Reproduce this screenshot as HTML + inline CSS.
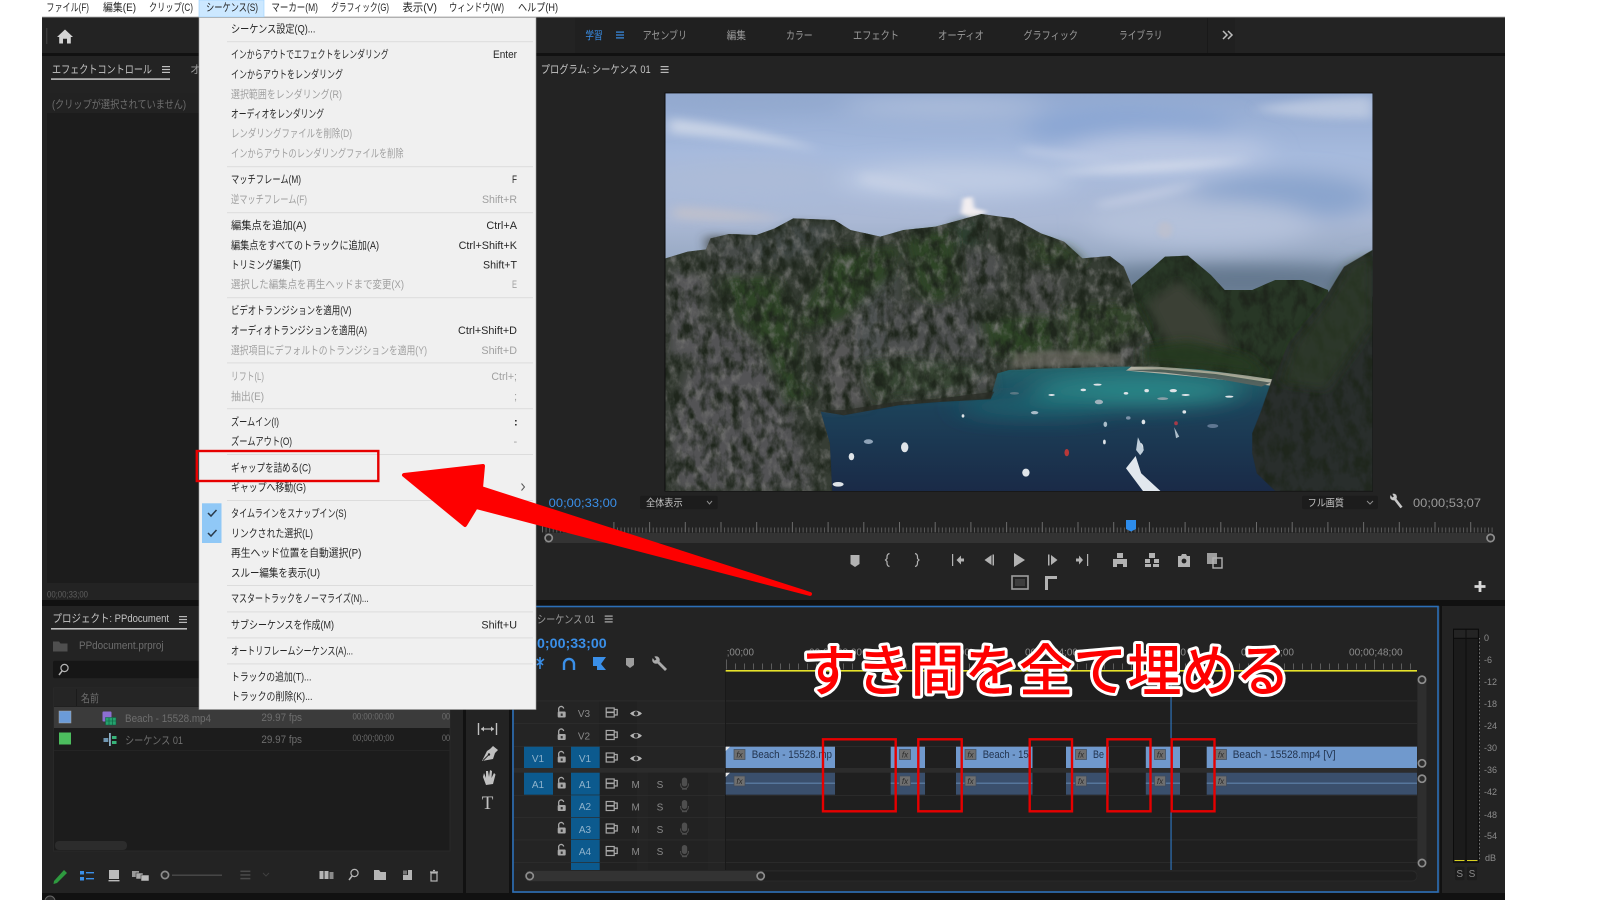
<!DOCTYPE html>
<html lang="ja">
<head>
<meta charset="utf-8">
<title>Premiere Pro シーケンスメニュー</title>
<style>
html,body{margin:0;padding:0;background:#fff;width:1600px;height:900px;overflow:hidden}
svg{display:block;filter:blur(.35px)}
text{font-family:"Liberation Sans","Noto Sans CJK JP",sans-serif;font-size:11px}
.m{fill:#262626}
.d{fill:#a0a0a0}
.g{fill:#9a9a9a}
.l{fill:#c4c4c4}
.f{fill:#6e6e6e}
.b{fill:#3a8fe8}
.c{fill:#22344f}
.t{fill:#8fb3cc;text-anchor:middle;font-size:10px}
.k{fill:#8a8a8a;text-anchor:middle;font-size:10px}
.r{fill:#8c8c8c;font-size:10px}
</style>
</head>
<body>
<svg width="1600" height="900" viewBox="0 0 1600 900" xmlns="http://www.w3.org/2000/svg">
<defs>
<linearGradient id="sky" x1="0" y1="0" x2="0" y2="1">
<stop offset="0" stop-color="#92a9d0"/><stop offset=".3" stop-color="#a6badd"/><stop offset=".62" stop-color="#abb9d5"/><stop offset=".82" stop-color="#98a9c3"/><stop offset="1" stop-color="#73869c"/>
</linearGradient>
<linearGradient id="sea" x1="0" y1="0" x2="0" y2="1">
<stop offset="0" stop-color="#23646c"/><stop offset=".35" stop-color="#1c4159"/><stop offset="1" stop-color="#1a2a47"/>
</linearGradient>
<filter id="bl40" x="-30%" y="-60%" width="160%" height="220%"><feGaussianBlur stdDeviation="30"/></filter>
<filter id="bl12" x="-30%" y="-60%" width="160%" height="220%"><feGaussianBlur stdDeviation="13"/></filter>
<filter id="bl5" x="-30%" y="-60%" width="160%" height="220%"><feGaussianBlur stdDeviation="5"/></filter>
<filter id="rockL" x="0" y="0" width="1" height="1" color-interpolation-filters="sRGB"><feTurbulence type="fractalNoise" baseFrequency="0.055 0.026" numOctaves="4" seed="7"/><feColorMatrix values="0 0 0 0 .47  0 0 0 0 .47  0 0 0 0 .46  2 0 0 0 -.9"/><feComposite in2="SourceAlpha" operator="in"/></filter>
<filter id="rockD" x="0" y="0" width="1" height="1" color-interpolation-filters="sRGB"><feTurbulence type="fractalNoise" baseFrequency="0.045 0.02" numOctaves="4" seed="23"/><feColorMatrix values="0 0 0 0 .12  0 0 0 0 .15  0 0 0 0 .11  2.6 0 0 0 -1.05"/><feComposite in2="SourceAlpha" operator="in"/></filter>
<clipPath id="ph"><rect x="12" y="10" width="1540" height="1193"/></clipPath>
<path id="mt" d="M12 505L60 485 100 478 110 445 150 432 210 435 250 415 290 385 380 390 415 420 480 440 530 420 600 410 640 395 700 372 770 385 830 430 880 455 920 505 980 498 1010 530 1028 590 1040 660 1070 740 1090 830 1000 830 850 835 760 840 735 850 720 925 610 935 520 945 400 975 350 965 370 1060 375 1203 12 1203Z"/>
<path id="mb" d="M1028 585L1075 530 1100 500 1150 497 1200 555 1230 600 1290 600 1340 570 1400 570 1455 600 1470 700 1350 882 1330 868 1180 838 1030 828Z"/>
<path id="mr" d="M1552 480L1490 530 1450 620 1370 760 1335 860 1310 960 1290 1030 1290 1090 1300 1150 1340 1203 1552 1203Z"/>
<g id="ham"><rect x="-4" y="-3.5" width="8" height="1.2"/><rect x="-4" y="-.6" width="8" height="1.2"/><rect x="-4" y="2.3" width="8" height="1.2"/></g>
<g id="lock" fill="#a8a8a8"><rect x="-4" y="-1" width="8" height="6" rx="1"/><path d="M-3-1V-3A2.5 2.5 0 0 1 2-4" fill="none" stroke="#a8a8a8" stroke-width="1.3"/><rect x="-1" y="1" width="2" height="2.4" fill="#333"/></g>
<g id="sync"><rect x="-5.5" y="-4.5" width="8" height="9" fill="none" stroke="#a8a8a8" stroke-width="1.2"/><rect x="-5.5" y="-1" width="8" height="1.6" fill="#a8a8a8"/><path d="M2.5-3H5.5V2.5H2.5" fill="none" stroke="#a8a8a8" stroke-width="1.3"/></g>
<g id="eye"><path d="M-6 0Q0-5.5 6 0 0 5.5-6 0Z" fill="#b4b4b4"/><circle r="2.2" fill="#2a2a2a"/></g>
<g id="mic" fill="#4e4e4e"><rect x="-2.7" y="-6" width="5.4" height="9" rx="2.7"/><path d="M-4 0Q-4 5 0 5 4 5 4 0" fill="none" stroke="#4e4e4e"/><rect x="-2.5" y="5" width="5" height="1.2"/></g>
<g id="fx"><rect width="11" height="10" fill="#6f6f6f" stroke="#414b5a" stroke-width=".7"/><text x="5.5" y="8" text-anchor="middle" style="font-size:8px;font-style:italic" fill="#2a2a2a">fx</text></g>
<g id="circ"><circle r="3.6" fill="#2c2c2c" stroke="#8d8d8d" stroke-width="1.7"/></g>
</defs>

<!-- page / menu bar -->
<rect width="1600" height="900" fill="#fff"/>
<rect x="42" y="0" width="1463" height="17.5" fill="#fff"/>
<rect x="42" y="16.6" width="1463" height="1" fill="#a8a8a8"/>
<rect x="199" y="0" width="65" height="17" fill="#cce8ff" stroke="#99d1ff" stroke-width=".6"/>
<text class="m" x="46.4" y="11" textLength="42.6" lengthAdjust="spacingAndGlyphs">ファイル(F)</text>
<text class="m" x="103" y="11" textLength="33" lengthAdjust="spacingAndGlyphs">編集(E)</text>
<text class="m" x="149" y="11" textLength="44" lengthAdjust="spacingAndGlyphs">クリップ(C)</text>
<text class="m" x="206" y="11" textLength="52" lengthAdjust="spacingAndGlyphs">シーケンス(S)</text>
<text class="m" x="271.4" y="11" textLength="46.6" lengthAdjust="spacingAndGlyphs">マーカー(M)</text>
<text class="m" x="331" y="11" textLength="58" lengthAdjust="spacingAndGlyphs">グラフィック(G)</text>
<text class="m" x="402.5" y="11" textLength="34.5" lengthAdjust="spacingAndGlyphs">表示(V)</text>
<text class="m" x="449" y="11" textLength="55" lengthAdjust="spacingAndGlyphs">ウィンドウ(W)</text>
<text class="m" x="518" y="11" textLength="40" lengthAdjust="spacingAndGlyphs">ヘルプ(H)</text>

<!-- app window -->
<rect x="42" y="17.5" width="1463" height="882.5" fill="#111"/>
<rect x="42" y="18" width="1463" height="35" fill="#232323"/>
<rect x="575" y="18" width="660" height="35" fill="#202020"/>
<rect x="1207" y="18" width="1" height="35" fill="#191919"/>
<path d="M65 29.5L73 37H70.8V43.5H67V38.8H63V43.5H59.2V37H57Z" fill="#d4d4d4"/>
<rect x="46" y="28" width="1.4" height="16" fill="#3b3b3b"/>
<text class="b" x="585.4" y="39" textLength="17.2" lengthAdjust="spacingAndGlyphs">学習</text>
<use href="#ham" x="620" y="35" fill="#3a8fe8"/>
<text class="g" x="642.6" y="39" textLength="44.4" lengthAdjust="spacingAndGlyphs">アセンブリ</text>
<text class="g" x="726.6" y="39" textLength="19.4" lengthAdjust="spacingAndGlyphs">編集</text>
<text class="g" x="786" y="39" textLength="26.7" lengthAdjust="spacingAndGlyphs">カラー</text>
<text class="g" x="853" y="39" textLength="46" lengthAdjust="spacingAndGlyphs">エフェクト</text>
<text class="g" x="938" y="39" textLength="46" lengthAdjust="spacingAndGlyphs">オーディオ</text>
<text class="g" x="1023.4" y="39" textLength="54.6" lengthAdjust="spacingAndGlyphs">グラフィック</text>
<text class="g" x="1119" y="39" textLength="43.5" lengthAdjust="spacingAndGlyphs">ライブラリ</text>
<path d="M1223 31L1227 35 1223 39M1228 31L1232 35 1228 39" fill="none" stroke="#bdbdbd" stroke-width="1.5"/>

<!-- effect control panel -->
<rect x="42" y="56" width="160" height="544" fill="#232323"/>
<rect x="47" y="93" width="155" height="490" fill="#1c1c1c"/>
<rect x="47" y="93" width="155" height="20" fill="#222"/>
<text class="l" x="52" y="73" textLength="100" lengthAdjust="spacingAndGlyphs">エフェクトコントロール</text>
<rect x="51" y="78.3" width="119" height="1.6" fill="#bcbcbc"/>
<use href="#ham" x="166" y="69.5" fill="#c0c0c0"/>
<text class="g" x="190" y="73">オ</text>
<text class="f" x="52" y="108" textLength="134" lengthAdjust="spacingAndGlyphs">(クリップが選択されていません)</text>
<text x="47" y="597.5" textLength="41" lengthAdjust="spacingAndGlyphs" fill="#5f5f5f" style="font-size:9px">00;00;33;00</text>

<!-- project panel -->
<rect x="42" y="606" width="421" height="287" fill="#232323"/>
<text class="l" x="52.5" y="622" textLength="116.5" lengthAdjust="spacingAndGlyphs">プロジェクト: PPdocument</text>
<rect x="51" y="628" width="136" height="1.6" fill="#bcbcbc"/>
<use href="#ham" x="183" y="619.5" fill="#b8b8b8"/>
<path d="M53 641.5H59L60.5 643.5H67.5V651.5H53Z" fill="#4f4f4f"/>
<text class="f" x="79" y="649" textLength="84.6" lengthAdjust="spacingAndGlyphs">PPdocument.prproj</text>
<rect x="53" y="660.7" width="400" height="17.5" rx="2" fill="#161616"/>
<circle cx="64.5" cy="668" r="3.6" fill="none" stroke="#b5b5b5" stroke-width="1.2"/><path d="M62 671L59 675" stroke="#b5b5b5" stroke-width="1.5"/>
<rect x="53.5" y="688" width="396.5" height="163" fill="#1c1c1c" stroke="#2b2b2b" stroke-width=".8"/>
<rect x="54" y="688" width="396" height="18.5" fill="#252525"/>
<rect x="76" y="689" width="1" height="17" fill="#1b1b1b"/>
<text class="f" x="81" y="702" textLength="18" lengthAdjust="spacingAndGlyphs">名前</text>
<rect x="54" y="707" width="396" height="21" fill="#3b3b3b"/>
<rect x="54" y="750" width="396" height=".8" fill="#262626"/>
<rect x="59" y="711" width="12" height="12" fill="#6b9bd8" stroke="#aaa" stroke-width=".5"/>
<rect x="59" y="732.5" width="12" height="12" fill="#4cbd5e"/>
<rect x="102.5" y="711.5" width="9" height="10" rx="1" fill="#8d6fd3"/><rect x="105.5" y="717.5" width="10.5" height="7.5" fill="#25a26e" stroke="#0e5a3c" stroke-width=".5"/><path d="M106 721H116M109 718V725M112.5 718V725" stroke="#0e5a3c" stroke-width=".6"/>
<rect x="109" y="733" width="1.8" height="13" fill="#8eb0c7"/><rect x="103.5" y="738" width="4.8" height="4" fill="#6f95b0"/><rect x="112" y="736" width="4.5" height="3" fill="#37b47a"/><rect x="112" y="741" width="4.5" height="3" fill="#37b47a"/>
<text class="f" x="125" y="722" textLength="86" lengthAdjust="spacingAndGlyphs">Beach - 15528.mp4</text>
<text class="f" x="125" y="744" textLength="58" lengthAdjust="spacingAndGlyphs">シーケンス 01</text>
<text class="f" x="261.4" y="721" textLength="40.6" lengthAdjust="spacingAndGlyphs">29.97 fps</text>
<text class="f" x="261.4" y="743" textLength="40.6" lengthAdjust="spacingAndGlyphs">29.97 fps</text>
<text class="f" x="352.5" y="719.5" textLength="41.5" lengthAdjust="spacingAndGlyphs" style="font-size:9px">00:00:00:00</text>
<text class="f" x="352.5" y="741" textLength="41.5" lengthAdjust="spacingAndGlyphs" style="font-size:9px">00;00;00;00</text>
<text class="f" x="442" y="719.5" textLength="8" lengthAdjust="spacingAndGlyphs" style="font-size:9px">00</text>
<text class="f" x="442" y="741" textLength="8" lengthAdjust="spacingAndGlyphs" style="font-size:9px">00</text>
<rect x="55" y="841" width="72" height="9" rx="4" fill="#2c2c2c"/>
<path d="M54 881L64 870 67 873 57 883 53.5 884Z" fill="#2e9a3f"/>
<rect x="80" y="871" width="4" height="3.5" fill="#3a8fe8"/><rect x="80" y="877" width="4" height="3.5" fill="#3a8fe8"/><rect x="86" y="872" width="8" height="1.4" fill="#3a8fe8"/><rect x="86" y="878" width="8" height="1.4" fill="#3a8fe8"/>
<rect x="109" y="870" width="10" height="9" fill="#bbb"/><rect x="108.5" y="880" width="11" height="1.4" fill="#bbb"/>
<rect x="132" y="871" width="7" height="6" fill="#999"/><rect x="136" y="873" width="7" height="6" fill="#aaa" stroke="#222" stroke-width=".5"/><rect x="141" y="875" width="8" height="6" fill="#bbb" stroke="#222" stroke-width=".5"/>
<use href="#circ" x="165" y="875"/><rect x="172" y="874.5" width="50" height="1.4" fill="#4a4a4a"/>
<use href="#ham" x="245.5" y="875" fill="#4a4a4a" transform="translate(-61.5 -218.8) scale(1.25)"/>
<path d="M263 873L266 876 269 873" fill="none" stroke="#3f3f3f" stroke-width="1.1"/>
<rect x="319.5" y="871" width="4" height="8" fill="#b5b5b5"/><rect x="324.5" y="871" width="4" height="8" fill="#b5b5b5"/><rect x="329.5" y="872" width="4" height="7" fill="#8a8a8a"/>
<circle cx="354.5" cy="873" r="3.6" fill="none" stroke="#b5b5b5" stroke-width="1.2"/><path d="M352 876L349 880" stroke="#b5b5b5" stroke-width="1.5"/>
<path d="M374 870H379L380.5 872H386V880H374Z" fill="#b5b5b5"/>
<path d="M403 870H412V880H403V875H408V870Z" fill="#b5b5b5"/><rect x="403" y="870.5" width="4" height="4" fill="#777"/>
<path d="M430 872H438M433 870.5H435" stroke="#b5b5b5" stroke-width="1.2"/><rect x="431" y="873" width="6" height="8" fill="none" stroke="#b5b5b5" stroke-width="1.2"/>

<!-- tools panel -->
<rect x="466" y="606" width="43" height="287" fill="#232323"/>
<path d="M478.5 723V735M496.5 723V735" stroke="#c0c0c0" stroke-width="1.4"/><path d="M481 729H494" stroke="#c0c0c0" stroke-width="1.2"/><path d="M481 729L484 726.5V731.5ZM494 729L491 726.5V731.5Z" fill="#c0c0c0"/>
<path d="M493 746L498 750 495 753 493 759 482 761 487 751 490 749Z" fill="#c0c0c0"/><path d="M483 760.5L488.5 755" stroke="#232323" stroke-width=".9"/><circle cx="489" cy="754.5" r="1.2" fill="#232323"/>
<path d="M483 777L484 773 486 778 486 771 488 771 489 777 490 770 492 771 491.5 778 494 773 495.5 774.5 493 784 486 785Z" fill="#c0c0c0"/>
<text x="487.5" y="809" text-anchor="middle" fill="#c0c0c0" style="font-size:19px;font-family:'Liberation Serif',serif">T</text>

<!-- program panel -->
<rect x="536" y="56" width="969" height="544" fill="#232323"/>
<text class="l" x="540.7" y="73" textLength="110" lengthAdjust="spacingAndGlyphs">プログラム: シーケンス 01</text>
<use href="#ham" x="664.6" y="69.5" fill="#b8b8b8"/>

<!-- photo -->
<rect x="664.5" y="92.5" width="708.5" height="399" fill="#0e0e0e"/>
<g transform="translate(660 90) scale(.4591 .3333)" clip-path="url(#ph)">
<rect x="12" y="10" width="1540" height="610" fill="url(#sky)"/>
<g filter="url(#bl40)">
<ellipse cx="1020" cy="110" rx="230" ry="60" fill="#8aa6d3"/>
<ellipse cx="1360" cy="320" rx="200" ry="70" fill="#8aa4cd"/>
<ellipse cx="200" cy="20" rx="220" ry="40" fill="#93a9ce"/>
<ellipse cx="640" cy="270" rx="260" ry="50" fill="#bfcce4"/>
<ellipse cx="1180" cy="400" rx="250" ry="70" fill="#b4c1da"/>
<ellipse cx="180" cy="270" rx="220" ry="60" fill="#acbbd8"/>
<ellipse cx="1100" cy="190" rx="230" ry="60" fill="#b8c6e2"/>
<ellipse cx="620" cy="50" rx="220" ry="25" fill="#b0c0dc"/>
<ellipse cx="1280" cy="570" rx="340" ry="45" fill="#62768c"/>
</g>
<g filter="url(#bl12)" opacity=".75">
<path d="M20 85Q200 110 350 180 200 150 20 130Z" fill="#d6ddea"/>
<path d="M860 245Q1080 210 1290 210 1130 250 900 250Z" fill="#dde2ee"/>
<path d="M1290 55Q1430 20 1552 20V85Q1400 90 1290 55Z" fill="#c4cfe3"/>
<path d="M950 340Q1080 300 1180 275 1110 320 960 350Z" fill="#d0d7e8"/>
<path d="M440 250Q560 270 660 320 520 310 440 280Z" fill="#c8d2e6"/>
<path d="M780 170Q920 190 1000 215 880 210 800 190Z" fill="#c4cfe6"/>
<path d="M30 350Q150 355 270 385 150 400 30 385Z" fill="#c4c2ca"/>
</g>
<g filter="url(#bl5)">
<path d="M660 325L680 320 685 355 715 365 680 385 655 370Z" fill="#f2eef0"/>
<ellipse cx="1100" cy="420" rx="16" ry="25" fill="#c4bfc8" opacity=".5"/>
</g>
<rect x="350" y="825" width="1000" height="380" fill="url(#sea)"/>
<g filter="url(#bl40)">
<ellipse cx="1040" cy="900" rx="230" ry="50" fill="#2a8486"/>
<ellipse cx="820" cy="950" rx="170" ry="30" fill="#1f6470"/>
</g>
<use href="#mb" fill="#283726"/>
<use href="#mb" filter="url(#rockD)"/>
<g filter="url(#bl12)">
<path d="M1060 640L1130 570 1200 660 1250 780 1110 780Z" fill="#3b3f35"/>
</g>
<path d="M1030 826Q1180 835 1335 868V888Q1180 860 1015 842Z" fill="#b7b6a8"/>
<path d="M1010 840L1100 848 1220 868 1310 890 1330 878 1210 852 1090 838Z" fill="#566460"/>
<use href="#mt" fill="#363d34"/>
<g filter="url(#bl12)">
<path d="M20 540L100 560 90 800 20 800Z" fill="#565658"/>
<path d="M100 700L230 720 290 960 340 1200 30 1200 20 1000Z" fill="#525254"/>
<path d="M340 700L440 680 450 950 360 960Z" fill="#565657"/>
<path d="M420 560L520 550 500 800 430 820Z" fill="#505252"/>
<path d="M480 640L700 640 725 900 500 920Z" fill="#4e504f"/>
<path d="M660 480L750 490 740 620 670 610Z" fill="#4e504f"/>
<path d="M780 540L880 560 860 820 770 820Z" fill="#4d4f4e"/>
<path d="M880 680L1040 680 1050 810 870 820Z" fill="#474947"/>
<path d="M100 440L220 450 210 520 110 520Z" fill="#464b48"/>
<path d="M200 470L300 400 380 410 330 500 220 510Z" fill="#424846"/>
<path d="M110 490L230 560 160 590 110 550Z" fill="#535555"/>
<path d="M640 400L700 390 690 470 640 470Z" fill="#2f4030"/>
</g>
<g filter="url(#bl12)" fill="#2e4526">
<path d="M130 560L250 560 290 690 300 880 340 910 280 950 230 780 170 690Z"/>
<path d="M530 440L640 420 650 600 600 640 560 600Z"/>
<path d="M380 480L520 470 500 560 400 680 330 720 300 700Z"/>
<path d="M700 680L860 680 870 770 790 810 720 790Z"/>
<path d="M880 650L1030 640 1060 720 950 800 880 790Z" opacity=".8"/>
<path d="M790 440L890 470 930 520 820 520Z" opacity=".8"/>
<path d="M430 820L540 800 720 830 650 900 470 930Z" opacity=".7"/>
</g>
<g clip-path="url(#ph)">
<use href="#mt" filter="url(#rockL)"/>
<use href="#mt" filter="url(#rockD)"/>
</g>
<g filter="url(#bl12)"><path d="M1050 770L1150 750 1280 800 1330 860 1210 836 1100 826 1050 820Z" fill="#27381f" opacity=".85"/></g>
<g filter="url(#bl5)"><path d="M770 790L860 780 1000 790 1010 822 850 830 765 835Z" fill="#77746c" opacity=".55"/></g>
<path d="M345 962L400 976 520 946 610 936 720 928 728 905 610 925 520 935 400 960Z" fill="#2a2c26" opacity=".75"/>
<use href="#mr" fill="#292e2c"/>
<use href="#mr" filter="url(#rockD)"/>
<g filter="url(#bl12)"><path d="M1500 520L1450 640 1380 760 1350 880 1450 900 1552 700V490Z" fill="#2d3f26" opacity=".55"/></g>
<g fill="#dfe4e8">
<ellipse cx="533" cy="1072" rx="8" ry="15"/><ellipse cx="417" cy="1100" rx="6" ry="11"/><ellipse cx="454" cy="1055" rx="10" ry="7" fill="#8fa3b8"/><ellipse cx="797" cy="1148" rx="8" ry="12"/><ellipse cx="1047" cy="1075" rx="6" ry="16"/><ellipse cx="886" cy="1088" rx="5" ry="11" fill="#b83838"/><ellipse cx="968" cy="1056" rx="3" ry="7"/><ellipse cx="1124" cy="1000" rx="4" ry="6" fill="#a63a48"/><ellipse cx="1204" cy="1008" rx="12" ry="6" fill="#5f7792"/><ellipse cx="970" cy="1003" rx="4" ry="8" fill="#a9bcc8"/><ellipse cx="1053" cy="996" rx="4" ry="7"/><ellipse cx="1020" cy="984" rx="5" ry="5" fill="#7d92a8"/><ellipse cx="1142" cy="966" rx="4" ry="5"/><ellipse cx="956" cy="936" rx="9" ry="7" fill="#9fb2bc"/><ellipse cx="816" cy="968" rx="8" ry="5" fill="#a9bcc8"/><ellipse cx="922" cy="900" rx="6" ry="4"/><ellipse cx="953" cy="884" rx="9" ry="3"/><ellipse cx="1118" cy="902" rx="8" ry="5"/><ellipse cx="1095" cy="926" rx="12" ry="4" fill="#8aa0a8"/><ellipse cx="1145" cy="915" rx="9" ry="3"/><ellipse cx="1240" cy="920" rx="9" ry="3"/><ellipse cx="1060" cy="902" rx="5" ry="5"/><ellipse cx="1015" cy="910" rx="5" ry="4"/><ellipse cx="853" cy="915" rx="7" ry="3"/><ellipse cx="772" cy="910" rx="10" ry="4" fill="#5a7884"/><ellipse cx="388" cy="1183" rx="12" ry="7"/><ellipse cx="660" cy="978" rx="3" ry="5"/>
</g>
<path d="M1015 1135L1036 1098 1048 1150 1090 1203H1052Z" fill="#e2e8ee"/><path d="M1041 1042L1054 1080 1046 1096 1037 1080Z" fill="#c0cfdb"/><path d="M1120 1012L1131 1040 1124 1045Z" fill="#aebfcc"/>
</g>

<!-- program controls -->
<text class="b" x="548.7" y="507" textLength="68.3" lengthAdjust="spacingAndGlyphs" style="font-size:12px">00;00;33;00</text>
<rect x="640" y="495.7" width="77.7" height="13.5" rx="2" fill="#1c1c1c"/>
<text class="l" x="646" y="506.5" textLength="36.6" lengthAdjust="spacingAndGlyphs" style="font-size:10px">全体表示</text>
<path d="M707 501L709.5 504 712 501" fill="none" stroke="#8d8d8d"/>
<rect x="1302" y="495.7" width="76" height="13.5" rx="2" fill="#1c1c1c"/>
<text class="l" x="1307.6" y="506.5" textLength="36.4" lengthAdjust="spacingAndGlyphs" style="font-size:10px">フル画質</text>
<path d="M1367 501L1370 504 1373 501" fill="none" stroke="#8d8d8d"/>
<path d="M1394.5 498.5L1401.5 507.5" stroke="#c8c8c8" stroke-width="2.6"/><circle cx="1393.5" cy="497" r="3.4" fill="#c8c8c8"/><path d="M1393 497L1391 493.5" stroke="#232323" stroke-width="2"/>
<text class="g" x="1413" y="507" textLength="68" lengthAdjust="spacingAndGlyphs" style="font-size:12px">00;00;53;07</text>
<path d="M542 530H1494" stroke="#5a5a5a" stroke-width="5" stroke-dasharray="1 2.57"/>
<path d="M542 527H1494" stroke="#6a6a6a" stroke-width="10" stroke-dasharray="1 34.7"/>
<path d="M1126 520H1136V529L1131 531.5 1126 529Z" fill="#2d8ceb"/>
<rect x="545" y="533" width="946" height="10" fill="#333"/>
<use href="#circ" x="548.7" y="538"/><use href="#circ" x="1490.6" y="538"/>
<g fill="#b2b2b2">
<path d="M850.5 555H859.5V564L855 567 850.5 564Z"/>
<path d="M889.5 553.5Q887 554 887 557V558.5L885.5 560 887 561.5V563Q887 566 889.5 566.5" fill="none" stroke="#b2b2b2" stroke-width="1.2"/>
<path d="M915 553.5Q917.5 554 917.5 557V558.5L919 560 917.5 561.5V563Q917.5 566 915 566.5" fill="none" stroke="#b2b2b2" stroke-width="1.2"/>
<path d="M952 554H953.2V566H952ZM956.5 560L961 555.5V558.5H964V561.5H961V564.5Z"/>
<path d="M992.5 554.5H994V565.5H992.5ZM984.5 560L991.5 555V565Z"/>
<path d="M1014 553L1025 560 1014 567Z"/>
<path d="M1048 554.5H1049.5V565.5H1048ZM1051 555L1057.5 560 1051 565Z"/>
<path d="M1087 554H1088.2V566H1087ZM1083 560L1079 564.5V561.5H1076V558.5H1079V555.5Z"/>
<path d="M1113 559H1127V567H1123V564H1117V567H1113ZM1117 553H1123V558H1117Z"/>
<path d="M1145 559H1150V563H1145ZM1154 559H1159V563H1154ZM1149 553H1155V558H1149ZM1145 564H1151V567H1145ZM1153 564H1159V567H1153Z"/>
<path d="M1178 556H1181L1182 554H1186L1187 556H1190V567H1178Z"/><circle cx="1184" cy="561" r="2.4" fill="#232323"/>
<rect x="1207" y="553" width="10" height="11" fill="#9d9d9d"/><rect x="1213" y="558" width="9" height="10" fill="none" stroke="#b2b2b2" stroke-width="1.4"/>
<rect x="1012" y="576" width="16" height="13" fill="none" stroke="#9d9d9d" stroke-width="1.6"/><rect x="1015" y="579" width="10" height="7" fill="#3d3d3d"/>
<path d="M1045 576H1057V579H1048V590H1045Z"/>
</g>
<path d="M1480 581V592M1474.5 586.5H1485.5" stroke="#d8d8d8" stroke-width="2.8"/>

<!-- timeline panel -->
<rect x="512" y="606" width="928" height="287" fill="#232323"/>
<rect x="725" y="672" width="692" height="198" fill="#1f1f1f"/>
<rect x="513" y="700.5" width="212" height="170" fill="#242424"/>
<rect x="599" y="700.5" width="38" height="170" fill="#212121"/>
<rect x="648" y="770" width="60" height="100" fill="#222"/>
<g fill="#2c2c2c">
<rect x="513" y="700.5" width="904" height=".9"/><rect x="513" y="723" width="904" height=".9"/><rect x="513" y="746" width="904" height=".9"/><rect x="513" y="795" width="904" height=".9"/><rect x="513" y="817" width="904" height=".9"/><rect x="513" y="839.5" width="904" height=".9"/><rect x="513" y="862" width="904" height=".9"/>
<rect x="513" y="768" width="904" height="4.7" fill="#2c2c2c"/>
</g>
<rect x="725" y="672" width="1" height="198" fill="#191919"/>
<text class="g" x="537" y="623" textLength="58" lengthAdjust="spacingAndGlyphs">シーケンス 01</text>
<use href="#ham" x="608.7" y="619" fill="#b0b0b0"/>
<text class="b" x="537" y="648" textLength="69.7" lengthAdjust="spacingAndGlyphs" style="font-size:14px;font-weight:bold">0;00;33;00</text>
<path d="M537 659L543 665M544 659L537 665M540 657V669" stroke="#3a8fe8" stroke-width="1.5"/>
<path d="M564 670V664A5 5 0 0 1 574 664V670" fill="none" stroke="#3a8fe8" stroke-width="2.4"/>
<path d="M593 657H606L601 664 606 670H597V666H593Z" fill="#3a8fe8"/>
<path d="M626 658H634V665L630 668 626 665Z" fill="#9d9d9d"/>
<path d="M656.5 660.5L666 670" stroke="#aaa" stroke-width="2.8"/><circle cx="656" cy="660" r="3.8" fill="#aaa"/><path d="M655.5 660L653 656.5" stroke="#232323" stroke-width="2.2"/>
<text class="r" x="726.7" y="655.5" textLength="27.3" lengthAdjust="spacingAndGlyphs">;00;00</text>
<text class="r" x="809" y="655.5" textLength="53" lengthAdjust="spacingAndGlyphs">00;00;08;00</text>
<text class="r" x="917" y="655.5" textLength="53" lengthAdjust="spacingAndGlyphs">00;00;16;00</text>
<text class="r" x="1025" y="655.5" textLength="53" lengthAdjust="spacingAndGlyphs">00;00;24;00</text>
<text class="r" x="1133" y="655.5" textLength="53" lengthAdjust="spacingAndGlyphs">00;00;32;00</text>
<text class="r" x="1241" y="655.5" textLength="53" lengthAdjust="spacingAndGlyphs">00;00;40;00</text>
<text class="r" x="1349" y="655.5" textLength="53.6" lengthAdjust="spacingAndGlyphs">00;00;48;00</text>
<path d="M726 666.5H1417" stroke="#5c5c5c" stroke-width="6" stroke-dasharray="1 8"/>
<path d="M726 664H1417" stroke="#5c5c5c" stroke-width="9" stroke-dasharray="1 107"/>
<rect x="725.7" y="670" width="691.3" height="1.6" fill="#e7e32a"/>
<!-- track buttons -->
<g fill="#0c5a8e">
<rect x="524" y="746.7" width="29" height="21.3"/><rect x="524" y="772.7" width="29" height="22"/>
<rect x="571" y="746.7" width="28.7" height="21.3"/><rect x="571" y="772.7" width="28.7" height="22"/><rect x="571" y="795.3" width="28.7" height="21.7"/><rect x="571" y="817.7" width="28.7" height="21.7"/><rect x="571" y="840" width="28.7" height="22"/><rect x="571" y="862.7" width="28.7" height="7.3"/>
</g>
<text class="t" x="538" y="762">V1</text><text class="t" x="538" y="788">A1</text>
<text class="t" x="585" y="762">V1</text><text class="t" x="585" y="788">A1</text><text class="t" x="585" y="810">A2</text><text class="t" x="585" y="833">A3</text><text class="t" x="585" y="855">A4</text>
<text class="k" x="584" y="717">V3</text><text class="k" x="584" y="739.5">V2</text>
<use href="#lock" x="561.7" y="712.5"/><use href="#lock" x="561.7" y="735"/><use href="#lock" x="561.7" y="757.5"/><use href="#lock" x="561.7" y="783.5"/><use href="#lock" x="561.7" y="806"/><use href="#lock" x="561.7" y="828.5"/><use href="#lock" x="561.7" y="850.5"/>
<use href="#sync" x="611.7" y="712.5"/><use href="#sync" x="611.7" y="735"/><use href="#sync" x="611.7" y="757.5"/><use href="#sync" x="611.7" y="783.5"/><use href="#sync" x="611.7" y="806"/><use href="#sync" x="611.7" y="828.5"/><use href="#sync" x="611.7" y="851"/>
<use href="#eye" x="636" y="713.5"/><use href="#eye" x="636" y="735.7"/><use href="#eye" x="636" y="758.5"/>
<text class="k" x="635.7" y="788">M</text><text class="k" x="635.7" y="810.5">M</text><text class="k" x="635.7" y="833">M</text><text class="k" x="635.7" y="855">M</text>
<text class="k" x="660" y="788">S</text><text class="k" x="660" y="810.5">S</text><text class="k" x="660" y="833">S</text><text class="k" x="660" y="855">S</text>
<use href="#mic" x="684.5" y="783.5"/><use href="#mic" x="684.5" y="806"/><use href="#mic" x="684.5" y="828.5"/><use href="#mic" x="684.5" y="851"/>
<!-- clips -->
<g fill="#7099cd">
<rect x="725.7" y="746.7" width="109.3" height="21.3"/><rect x="890.7" y="746.7" width="34.3" height="21.3"/><rect x="956" y="746.7" width="76.5" height="21.3"/><rect x="1066" y="746.7" width="43" height="21.3"/><rect x="1145.8" y="746.7" width="34.2" height="21.3"/><rect x="1206.7" y="746.7" width="210.3" height="21.3"/>
</g>
<g fill="#3a4f6c">
<rect x="725.7" y="772.7" width="109.3" height="22"/><rect x="890.7" y="772.7" width="34.3" height="22"/><rect x="956" y="772.7" width="76.5" height="22"/><rect x="1066" y="772.7" width="43" height="22"/><rect x="1145.8" y="772.7" width="34.2" height="22"/><rect x="1206.7" y="772.7" width="210.3" height="22"/>
</g>
<g fill="#6a90bb">
<rect x="725.7" y="782.7" width="109.3" height=".9"/><rect x="890.7" y="782.7" width="34.3" height=".9"/><rect x="956" y="782.7" width="76.5" height=".9"/><rect x="1066" y="782.7" width="43" height=".9"/><rect x="1145.8" y="782.7" width="34.2" height=".9"/><rect x="1206.7" y="782.7" width="210.3" height=".9"/>
</g>
<path d="M725.7 746.7H730L725.7 751ZM725.7 772.7H730L725.7 777Z" fill="#e8e8e8"/>
<use href="#fx" x="734" y="749.5"/><use href="#fx" x="734" y="776"/><use href="#fx" x="899.5" y="749.5"/><use href="#fx" x="899.5" y="776"/><use href="#fx" x="965" y="749.5"/><use href="#fx" x="965" y="776"/><use href="#fx" x="1075.5" y="749.5"/><use href="#fx" x="1075.5" y="776"/><use href="#fx" x="1154.5" y="749.5"/><use href="#fx" x="1154.5" y="776"/><use href="#fx" x="1215.5" y="749.5"/><use href="#fx" x="1215.5" y="776"/>
<text class="c" x="751.7" y="758" textLength="80.3" lengthAdjust="spacingAndGlyphs">Beach - 15528.mp</text>
<text class="c" x="982.7" y="758" textLength="46" lengthAdjust="spacingAndGlyphs">Beach - 15</text>
<text class="c" x="1093" y="758" textLength="11" lengthAdjust="spacingAndGlyphs">Be</text>
<text class="c" x="1232.7" y="758" textLength="102.9" lengthAdjust="spacingAndGlyphs">Beach - 15528.mp4 [V]</text>
<rect x="1170.5" y="672" width="1.1" height="198" fill="#2f78c4"/>
<!-- v scroll -->
<rect x="1417.5" y="680" width="9" height="83" fill="#2e2e2e"/><rect x="1417.5" y="779" width="9" height="84" fill="#2e2e2e"/>
<use href="#circ" x="1422" y="679.7"/><use href="#circ" x="1422" y="763.3"/><use href="#circ" x="1422" y="778.7"/><use href="#circ" x="1422" y="863"/>
<!-- h scroll -->
<rect x="525" y="871" width="892" height="10" rx="5" fill="#1e1e1e" stroke="#2c2c2c" stroke-width=".7"/>
<rect x="527" y="871" width="236" height="10" fill="#333"/>
<use href="#circ" x="529.7" y="876"/><use href="#circ" x="760.7" y="876"/>
<!-- timeline border -->
<rect x="513" y="606.5" width="925" height="285.5" fill="none" stroke="#2c6fb8" stroke-width="1.6"/>

<!-- meter -->
<rect x="1442" y="606" width="63" height="287" fill="#232323"/>
<rect x="1453.5" y="629.3" width="24.9" height="233" fill="#1b1b1b" stroke="#0c0c0c" stroke-width="1"/>
<rect x="1453.5" y="629.3" width="24.9" height="9" fill="#242424" stroke="#0c0c0c" stroke-width="1"/>
<rect x="1465.5" y="629.3" width="1" height="233" fill="#0d0d0d"/>
<path d="M1454.5 860.5H1464.5M1467 860.5H1477.5" stroke="#d8d020" stroke-width="1"/>
<path d="M1479.5 638V860" stroke="#7a7a7a" stroke-width="1" stroke-dasharray="1.4 2.2"/>
<text class="r" style="font-size:9px" x="1484" y="641">0</text><text class="r" style="font-size:9px" x="1484" y="663">-6</text><text class="r" style="font-size:9px" x="1484" y="685">-12</text><text class="r" style="font-size:9px" x="1484" y="707">-18</text><text class="r" style="font-size:9px" x="1484" y="729">-24</text><text class="r" style="font-size:9px" x="1484" y="751">-30</text><text class="r" style="font-size:9px" x="1484" y="773">-36</text><text class="r" style="font-size:9px" x="1484" y="795">-42</text><text class="r" style="font-size:9px" x="1484" y="818">-48</text><text class="r" style="font-size:9px" x="1484" y="839">-54</text><text class="r" style="font-size:9px" x="1485" y="861">dB</text>
<rect x="1455" y="866.7" width="9.5" height="13.5" rx="1.5" fill="#1c1c1c"/><rect x="1467" y="866.7" width="10" height="13.5" rx="1.5" fill="#1c1c1c"/>
<text class="k" x="1459.7" y="877">S</text><text class="k" x="1472" y="877">S</text>
<circle cx="50" cy="901" r="5" fill="#2a2a2a" stroke="#666"/>

<!-- menu -->
<rect x="199" y="17.5" width="337" height="692" fill="#f0f0f0" stroke="#9f9f9f" stroke-width=".6"/>
<rect x="202" y="503.3" width="19.5" height="39.7" fill="#90c8f6"/>
<path d="M208 513L211 516 216.5 510M208 533L211 536 216.5 530" fill="none" stroke="#2a3a4a" stroke-width="1.5"/>
<g fill="#dcdcdc">
<rect x="227" y="41.2" width="306" height="1"/><rect x="227" y="166.2" width="306" height="1"/><rect x="227" y="212.2" width="306" height="1"/><rect x="227" y="297.2" width="306" height="1"/><rect x="227" y="362.4" width="306" height="1"/><rect x="227" y="408.2" width="306" height="1"/><rect x="227" y="454" width="306" height="1"/><rect x="227" y="500" width="306" height="1"/><rect x="227" y="585" width="306" height="1"/><rect x="227" y="611.4" width="306" height="1"/><rect x="227" y="637.4" width="306" height="1"/><rect x="227" y="663.4" width="306" height="1"/>
</g>
<text class="m" x="231" y="32.5" textLength="84.4" lengthAdjust="spacingAndGlyphs">シーケンス設定(Q)...</text>
<text class="m" x="231" y="58" textLength="157.6" lengthAdjust="spacingAndGlyphs">インからアウトでエフェクトをレンダリング</text>
<text class="m" x="493" y="58" textLength="24" lengthAdjust="spacingAndGlyphs">Enter</text>
<text class="m" x="231" y="78" textLength="112" lengthAdjust="spacingAndGlyphs">インからアウトをレンダリング</text>
<text class="d" x="231" y="98" textLength="111" lengthAdjust="spacingAndGlyphs">選択範囲をレンダリング(R)</text>
<text class="m" x="231" y="117.5" textLength="93" lengthAdjust="spacingAndGlyphs">オーディオをレンダリング</text>
<text class="d" x="231" y="137" textLength="121" lengthAdjust="spacingAndGlyphs">レンダリングファイルを削除(D)</text>
<text class="d" x="231" y="157" textLength="172.6" lengthAdjust="spacingAndGlyphs">インからアウトのレンダリングファイルを削除</text>
<text class="m" x="231" y="183" textLength="70" lengthAdjust="spacingAndGlyphs">マッチフレーム(M)</text>
<text class="m" x="512" y="183" textLength="5" lengthAdjust="spacingAndGlyphs">F</text>
<text class="d" x="231" y="203" textLength="76" lengthAdjust="spacingAndGlyphs">逆マッチフレーム(F)</text>
<text class="d" x="482" y="203" textLength="35" lengthAdjust="spacingAndGlyphs">Shift+R</text>
<text class="m" x="231" y="229" textLength="75.4" lengthAdjust="spacingAndGlyphs">編集点を追加(A)</text>
<text class="m" x="486.4" y="229" textLength="30.6" lengthAdjust="spacingAndGlyphs">Ctrl+A</text>
<text class="m" x="231" y="249" textLength="148" lengthAdjust="spacingAndGlyphs">編集点をすべてのトラックに追加(A)</text>
<text class="m" x="458.6" y="249" textLength="58.4" lengthAdjust="spacingAndGlyphs">Ctrl+Shift+K</text>
<text class="m" x="231" y="268.5" textLength="70" lengthAdjust="spacingAndGlyphs">トリミング編集(T)</text>
<text class="m" x="483" y="268.5" textLength="34" lengthAdjust="spacingAndGlyphs">Shift+T</text>
<text class="d" x="231" y="288" textLength="173" lengthAdjust="spacingAndGlyphs">選択した編集点を再生ヘッドまで変更(X)</text>
<text class="d" x="512" y="288" textLength="5" lengthAdjust="spacingAndGlyphs">E</text>
<text class="m" x="231" y="314" textLength="120.4" lengthAdjust="spacingAndGlyphs">ビデオトランジションを適用(V)</text>
<text class="m" x="231" y="334" textLength="136" lengthAdjust="spacingAndGlyphs">オーディオトランジションを適用(A)</text>
<text class="m" x="458" y="334" textLength="59" lengthAdjust="spacingAndGlyphs">Ctrl+Shift+D</text>
<text class="d" x="231" y="354" textLength="196" lengthAdjust="spacingAndGlyphs">選択項目にデフォルトのトランジションを適用(Y)</text>
<text class="d" x="481.4" y="354" textLength="35.6" lengthAdjust="spacingAndGlyphs">Shift+D</text>
<text class="d" x="231" y="380" textLength="33" lengthAdjust="spacingAndGlyphs">リフト(L)</text>
<text class="d" x="491.4" y="380" textLength="25.6" lengthAdjust="spacingAndGlyphs">Ctrl+;</text>
<text class="d" x="231" y="400" textLength="33" lengthAdjust="spacingAndGlyphs">抽出(E)</text>
<text class="d" x="514" y="400">;</text>
<text class="m" x="231" y="425.5" textLength="48" lengthAdjust="spacingAndGlyphs">ズームイン(I)</text>
<text class="m" x="514" y="425.5" style="font-weight:bold">:</text>
<text class="m" x="231" y="445" textLength="61" lengthAdjust="spacingAndGlyphs">ズームアウト(O)</text>
<text class="d" x="513.5" y="445">-</text>
<text class="m" x="231" y="471.5" textLength="80" lengthAdjust="spacingAndGlyphs">ギャップを詰める(C)</text>
<text class="m" x="231" y="491" textLength="75" lengthAdjust="spacingAndGlyphs">ギャップへ移動(G)</text>
<path d="M521.5 483.5L524.5 487 521.5 490.5" fill="none" stroke="#555" stroke-width="1"/>
<text class="m" x="231" y="517" textLength="115.4" lengthAdjust="spacingAndGlyphs">タイムラインをスナップイン(S)</text>
<text class="m" x="231" y="537" textLength="82" lengthAdjust="spacingAndGlyphs">リンクされた選択(L)</text>
<text class="m" x="231" y="556.5" textLength="130.4" lengthAdjust="spacingAndGlyphs">再生ヘッド位置を自動選択(P)</text>
<text class="m" x="231" y="576.5" textLength="89" lengthAdjust="spacingAndGlyphs">スルー編集を表示(U)</text>
<text class="m" x="231" y="602" textLength="137.6" lengthAdjust="spacingAndGlyphs">マスタートラックをノーマライズ(N)...</text>
<text class="m" x="231" y="628.5" textLength="103" lengthAdjust="spacingAndGlyphs">サブシーケンスを作成(M)</text>
<text class="m" x="481.4" y="628.5" textLength="35.6" lengthAdjust="spacingAndGlyphs">Shift+U</text>
<text class="m" x="231" y="654.5" textLength="122" lengthAdjust="spacingAndGlyphs">オートリフレームシーケンス(A)...</text>
<text class="m" x="231" y="680.5" textLength="80.4" lengthAdjust="spacingAndGlyphs">トラックの追加(T)...</text>
<text class="m" x="231" y="700" textLength="81.5" lengthAdjust="spacingAndGlyphs">トラックの削除(K)...</text>

<!-- annotations -->
<g fill="none" stroke="#e60000" stroke-width="2.4">
<rect x="196.8" y="451" width="181.5" height="30"/>
<rect x="823" y="739.3" width="72.7" height="72"/>
<rect x="918.3" y="739.3" width="43.4" height="72"/>
<rect x="1029.7" y="739.3" width="42.3" height="72"/>
<rect x="1107.4" y="739.3" width="43.1" height="72"/>
<rect x="1171.7" y="739.3" width="42.8" height="72"/>
</g>
<path d="M404 475L483 466 481 488 810 594 476 507 465 525Z" fill="#fe0000" stroke="#fe0000" stroke-width="4" stroke-linejoin="round"/>
<text x="1046" y="691" text-anchor="middle" textLength="488" lengthAdjust="spacingAndGlyphs" fill="#fe0000" stroke="#fff" stroke-width="6" stroke-linejoin="round" paint-order="stroke" style="font-size:56px;font-weight:500;font-family:'Noto Sans CJK JP',sans-serif">すき間を全て埋める</text>
</svg>
</body>
</html>
